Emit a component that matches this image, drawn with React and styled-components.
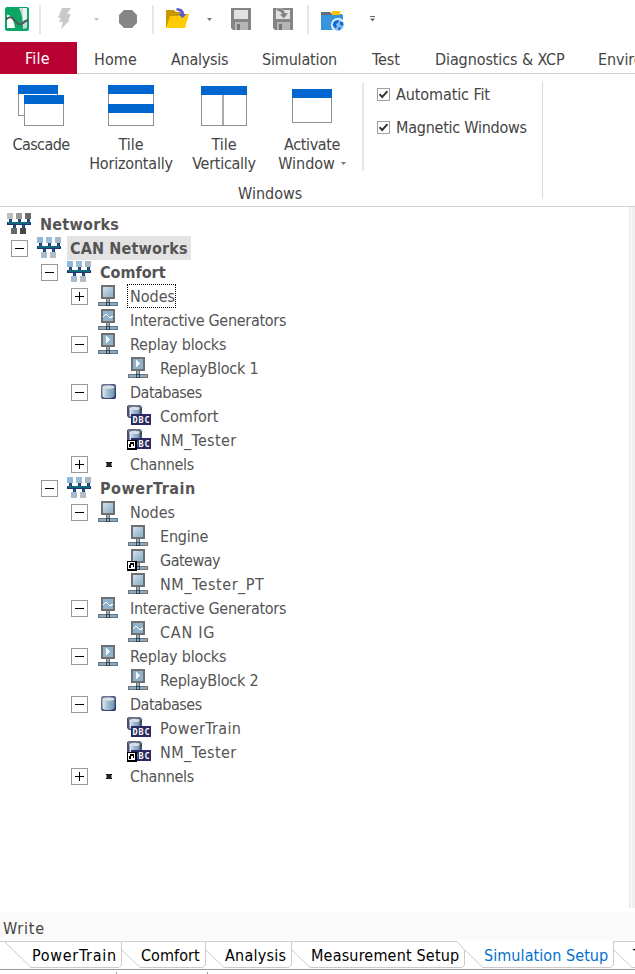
import React from 'react';
import styled, { createGlobalStyle } from 'styled-components';

const Global = createGlobalStyle`
  * { box-sizing: border-box; }
  body { margin: 0; background: #fff; overflow: hidden; }
  svg { display: block; flex: none; }
`;

const Window = styled.div`
  width: 635px;
  height: 974px;
  overflow: hidden;
  display: flex;
  flex-direction: column;
  background: #fff;
  font: 16px/19px "DejaVu Sans Condensed", "DejaVu Sans", sans-serif;
  color: #444;
  white-space: nowrap;
`;

const Text = styled.span`
  letter-spacing: ${(p) => p.$ls || 0}px;
`;

/* ---------- quick access bar ---------- */
const QuickBar = styled.header`
  height: 42px;
  flex: none;
  display: flex;
  align-items: flex-start;
  padding-left: 5px;
`;
const Slot = styled.div`
  width: ${(p) => p.$w}px;
  padding-top: ${(p) => p.$top}px;
  flex: none;
`;
const Divider = styled.div`
  width: 2px;
  height: 29px;
  margin: 5px ${(p) => p.$gap}px 0 0;
  background: #e6e6e6;
  flex: none;
`;

const Logo = () => (
  <svg width="24" height="24" viewBox="0 0 24 24">
    <rect width="24" height="24" rx="2" fill="#0aa765" />
    <path d="M2 9Q2 7 4 8Q9 12 10 21H2Z" fill="#fff" />
    <path d="M14 1H22V21L18 22Q18 8 14 1Z" fill="#cdd6dd" />
    <path d="M18 1H22V13L18 14Z" fill="#eef1f4" />
    <path d="M1 12.5Q5 8.5 8 11.5C12 16 14 19 18 16Q20 14 23 13" fill="none" stroke="#50555a" strokeWidth="2" />
  </svg>
);
const Bolt = () => (
  <svg width="14" height="22" viewBox="0 0 14 22">
    <path d="M4 0H13L9 6H13L10 12H12L3 21L5 14H1L3 10H0Z" fill="#c9c9c9" />
  </svg>
);
const Caret = ({ color = '#777' }) => (
  <svg width="5" height="3" viewBox="0 0 5 3"><path d="M0 0H5L2.5 3Z" fill={color} /></svg>
);
const Stop = () => (
  <svg width="18" height="18" viewBox="0 0 18 18">
    <path d="M5 0H13L18 5V13L13 18H5L0 13V5Z" fill="#868686" />
  </svg>
);
const OpenFolder = () => (
  <svg width="23" height="20" viewBox="0 0 23 20">
    <path d="M0 2H8L10 4H18V19H0Z" fill="#c99700" />
    <path d="M4 8H12L14 6H23L19 20H0Z" fill="#ffcb05" />
    <path d="M10.5 0Q18 0 18 6H20.5L16.5 10L12 6H15Q15 3 10.5 2.5Z" fill="#5a5ad0" />
  </svg>
);
const Floppy = ({ arrow }) => (
  <svg width="22" height="22" viewBox="0 0 22 22">
    <path d="M1 0H21V22H3L1 20Z" fill="#858585" />
    <path d="M4 2H18V11H4Z" fill="#e2e2e2" />
    <path d="M5 14H18V22H5Z" fill="#b5b5b5" />
    <path d="M7 16H10V22H7Z" fill="#777" />
    {arrow && <path d="M5 0Q12 0 13 5H16.5L12 10.5L7 6H10Q9 3 5 3Z" fill="#808080" stroke="#e2e2e2" strokeWidth=".5" />}
  </svg>
);
const GlobeFolder = () => (
  <svg width="24" height="20" viewBox="0 0 24 20">
    <path d="M0 1H9L11 3H21V6H0Z" fill="#666b78" />
    <rect x="11" y="0" width="8" height="4" fill="#ffc400" />
    <rect y="4" width="22" height="15" fill="#3994dc" />
    <circle cx="17" cy="14" r="7" fill="#fff" />
    <circle cx="17" cy="14" r="5.7" fill="#87bcf2" />
    <path d="M13 10.5L17 9L18 11L15 13L16 16L14 17L11.8 14ZM19 11H22L22.4 14L20.5 15L19 13ZM17.5 16.5L20 16L19 19H17Z" fill="#0b6bd0" />
  </svg>
);
const Customize = () => (
  <svg width="5" height="6" viewBox="0 0 5 6">
    <path d="M0 0H5V1H0ZM0 2.5H5L2.5 5.5Z" fill="#666" />
  </svg>
);

/* ---------- ribbon tabs ---------- */
const Tabs = styled.nav`
  height: 32px;
  flex: none;
  display: flex;
  border-bottom: 1px solid #d2d2d2;
`;
const FileTab = styled.div`
  width: 77px;
  height: 32px;
  padding: 7px 0 0 25px;
  background: #b90032;
  color: #fff;
  flex: none;
`;
const Tab = styled.div`
  width: ${(p) => p.$w}px;
  padding: 8px 0 0 17px;
  flex: none;
`;

/* ---------- ribbon ---------- */
const Ribbon = styled.section`
  height: 133px;
  flex: none;
  display: flex;
  border-bottom: 1px solid #d2d2d2;
`;
const Group = styled.div`
  width: 543px;
  height: 118px;
  margin-top: 7px;
  border-right: 1px solid #dadada;
  display: flex;
  flex-direction: column;
`;
const GroupBody = styled.div`
  height: 103px;
  flex: none;
  display: flex;
  padding-top: 2px;
`;
const GroupTitle = styled.div`
  flex: none;
  padding-left: 238px;
`;
const BigButton = styled.div`
  width: ${(p) => p.$w}px;
  flex: none;
  display: flex;
  flex-direction: column;
  align-items: center;
`;
const IconArea = styled.div`
  height: 52px;
  padding-top: 2px;
`;
const ButtonLine = styled.div`
  height: 19px;
  display: flex;
  align-items: center;
  gap: 6px;
`;
const GroupRule = styled.div`
  width: 2px;
  height: 88px;
  margin: 0 13px 0 ${(p) => p.$ml}px;
  background: #e6e6e6;
`;
const Checks = styled.div`
  display: flex;
  flex-direction: column;
  gap: 14px;
  padding-top: 2px;
`;
const CheckRow = styled.div`
  display: flex;
  align-items: center;
  gap: 6px;
`;
const CheckBox = styled.div`
  width: 13px;
  height: 13px;
  border: 1px solid #a0a0a0;
  display: grid;
  place-items: center;
`;
const Check = () => (
  <CheckBox>
    <svg width="9" height="9" viewBox="0 0 9 9"><path d="M.5 4.2L3.2 7L8.5 1.2" fill="none" stroke="#333" strokeWidth="1.9" /></svg>
  </CheckBox>
);

const Pane = ({ x, y, w, h }) => (
  <g>
    <rect x={x + .5} y={y + .5} width={w - 1} height={h - 1} fill="#fff" stroke="#909090" />
    <rect x={x} y={y} width={w} height="9" fill="#0066cf" />
  </g>
);
const windowIcons = {
  cascade: <><Pane x={0} y={0} w={40} h={31} /><Pane x={6} y={10} w={40} h={31} /></>,
  horizontal: <><Pane x={0} y={0} w={46} h={41} /><rect y="19" width="46" height="9" fill="#0066cf" /></>,
  vertical: <><Pane x={0} y={1} w={46} h={40} /><rect x="21" y="10" width="2" height="30" fill="#aaa" /></>,
  activate: <Pane x={3} y={4} w={40} h={34} />,
};
const WindowIcon = ({ kind }) => <svg width="46" height="42" viewBox="0 0 46 42">{windowIcons[kind]}</svg>;

/* ---------- tree ---------- */
const Main = styled.main`
  flex: 1;
  display: flex;
  justify-content: space-between;
`;
const Tree = styled.div`
  padding-top: 5px;
  color: #545454;
`;
const Row = styled.div`
  height: 24px;
  display: flex;
  padding-left: ${(p) => (p.$level ? 7 + 30 * (p.$level - 1) : 7)}px;
`;
const Toggle = styled.div`
  width: 30px;
  padding: 4px 0 0 4px;
`;
const IconBox = styled.div`
  width: 24px;
  height: 24px;
`;
const Label = styled.div`
  height: 24px;
  margin-left: 6px;
  padding: 3px ${(p) => (p.$focus ? 1 : 3)}px 0 3px;
  letter-spacing: ${(p) => p.$ls}px;
  font-weight: ${(p) => (p.$bold ? 700 : 400)};
  background: ${(p) => (p.$selected ? '#e3e3e3' : 'transparent')};
  outline: ${(p) => (p.$focus ? '1px dotted #000' : 'none')};
  outline-offset: -1px;
`;
const Scroll = styled.div`
  width: 6px;
  height: 701px;
  background: #f0f0f0;
  border-left: 2px solid #ededed;
  box-shadow: inset 1px 0 #fafafa;
`;

const Expander = ({ open }) => (
  <svg width="17" height="17" viewBox="0 0 17 17">
    <rect x=".5" y=".5" width="16" height="16" fill="#fff" stroke="#999" />
    <path d={open ? 'M4 8H13V9H4Z' : 'M4 8H13V9H4ZM8 4H9V13H8Z'} fill="#000" />
  </svg>
);
const Shortcut = ({ x, y }) => (
  <g transform={`translate(${x} ${y})`} shapeRendering="crispEdges">
    <rect width="10" height="10" fill="#000" />
    <rect x="1" y="1" width="7" height="7" fill="#fff" />
    <path d="M3 2H7V6H6V4H4V7H2V4H3V3H4V3H3Z" fill="#000" />
  </g>
);
const Network = ({ gray }) => {
  const c = gray ? ['#bdbdbd', '#999', '#686868', '#686868', '#484848'] : ['#90b8d8', '#9dbdd6', '#a4b8c8', '#a8bccb', '#b2bdc6'];
  return (
    <svg width="24" height="24" viewBox="0 0 24 24" shapeRendering="crispEdges">
      <path d="M2 7H5V12H2ZM11 7H14V12H11ZM20 7H23V12H20ZM6 12H9V16H6ZM15 12H18V16H15Z" fill="#263777" />
      <path d="M3 7H4V11H3ZM12 7H13V11H12ZM21 7H22V11H21ZM7 12H8V16H7ZM16 12H17V16H16Z" fill="#146680" />
      <rect y="10" width="24" height="3" fill="#233873" />
      <rect x="1" y="10" width="22" height="2" fill="#10697f" />
      <rect x="0" y="1" width="6" height="6" fill={c[0]} />
      <rect x="9" y="1" width="6" height="6" fill={c[1]} />
      <rect x="18" y="1" width="6" height="6" fill={c[2]} />
      <rect x="4" y="16" width="6" height="6" fill={c[3]} />
      <rect x="13" y="16" width="6" height="6" fill={c[4]} />
    </svg>
  );
};
const NodeIcon = ({ sign, link }) => (
  <svg width="24" height="24" viewBox="0 0 24 24" shapeRendering="crispEdges">
    <defs>
      <linearGradient id="screen" x1="0" y1="0" x2="1" y2="1">
        <stop offset="0" stopColor="#d2e0ea" /><stop offset="1" stopColor="#86aecb" />
      </linearGradient>
    </defs>
    <rect x="4" y="1" width="14" height="14" fill="#6f6f6f" />
    <rect x="6" y="3" width="10" height="10" fill={sign ? '#8fb3cc' : 'url(#screen)'} />
    <rect x="9" y="15" width="4" height="3" fill="#707070" />
    <rect x="10" y="15" width="2" height="3" fill="#95b3c8" />
    <rect x="1" y="18" width="20" height="4" fill="#6d747a" />
    <rect x="2" y="19" width="18" height="2" fill="#88acc5" />
    <rect x="9" y="18" width="4" height="4" fill="#39424b" />
    <rect x="10" y="19" width="2" height="2" fill="#8db1ca" />
    {sign === 'wave' && <path d="M6 8H7V7H8V6H10V7H11V8H12V9H14V8H16V9H15V10H12V9H11V8H10V7H8V8H7V9H6Z" fill="#fff" />}
    {sign === 'play' && <path d="M9 4H10V5H11V6H12V7H13V8H12V9H11V10H10V11H9Z" fill="#fff" />}
    {link && <Shortcut x={0} y={13} />}
  </svg>
);
const Cylinder = () => (
  <svg width="24" height="24" viewBox="0 0 24 24">
    <defs>
      <linearGradient id="drum">
        <stop offset="0" stopColor="#e3eaf2" /><stop offset=".45" stopColor="#9fb9cf" /><stop offset="1" stopColor="#7497b8" />
      </linearGradient>
      <linearGradient id="drumEdge" x1="0" y1="0" x2="1" y2="1">
        <stop offset="0" stopColor="#7b8799" /><stop offset="1" stopColor="#202a5c" />
      </linearGradient>
    </defs>
    <path d="M6 4H17Q19 4 19 6V17Q19 19 17 19H6Q4 19 4 17V6Q4 4 6 4Z" fill="url(#drumEdge)" />
    <path d="M5.5 7H17.5V16Q16 18 11.5 18Q7 18 5.5 16.5Z" fill="url(#drum)" />
    <ellipse cx="11.5" cy="7" rx="6" ry="1.8" fill="#d8e1e9" />
  </svg>
);
const Dbc = ({ link }) => (
  <svg width="25" height="24" viewBox="0 0 25 24">
    <path d="M0 2L2 1H13L15 3V14H2L0 12Z" fill="#465170" />
    <path d="M1 2L3 1H12L14 3V4H1Z" fill="#6b7485" />
    <path d="M2.5 4H12.5V13H4L2.5 12Z" fill="url(#drum)" />
    <ellipse cx="7.5" cy="4.4" rx="5" ry="1.6" fill="#d8e1e9" />
    <rect x="4" y="10" width="20" height="11" fill="#2a2a62" />
    <text x="5.5" y="18.8" fill="#fff" fontFamily="DejaVu Sans Mono" fontWeight="700" fontSize="8.5" textLength="17" lengthAdjust="spacing">DBC</text>
    {link && <Shortcut x={0} y={12} />}
  </svg>
);
const Channel = () => (
  <svg width="24" height="24" viewBox="0 0 24 24" shapeRendering="crispEdges">
    <rect x="9" y="10" width="6" height="5" fill="#9a9a9a" />
    <rect x="10" y="10" width="4" height="5" fill="#222" />
    <path d="M9 10H10V11H9ZM14 10H15V11H14ZM9 14H10V15H9ZM14 14H15V15H14Z" fill="#000" />
  </svg>
);
const icons = {
  netGray: <Network gray />, net: <Network />, node: <NodeIcon />, nodeLink: <NodeIcon link />,
  wave: <NodeIcon sign="wave" />, play: <NodeIcon sign="play" />, db: <Cylinder />,
  dbc: <Dbc />, dbcLink: <Dbc link />, channel: <Channel />,
};

const rows = [
  { level: 0, icon: 'netGray', text: 'Networks', ls: 0.25, bold: true },
  { level: 1, open: true, icon: 'net', text: 'CAN Networks', ls: 0.15, bold: true, selected: true },
  { level: 2, open: true, icon: 'net', text: 'Comfort', ls: 0, bold: true },
  { level: 3, open: false, icon: 'node', text: 'Nodes', ls: 0, focus: true },
  { level: 3, icon: 'wave', text: 'Interactive Generators', ls: -0.3 },
  { level: 3, open: true, icon: 'play', text: 'Replay blocks', ls: -0.2 },
  { level: 4, icon: 'play', text: 'ReplayBlock 1', ls: -0.22 },
  { level: 3, open: true, icon: 'db', text: 'Databases', ls: -0.5 },
  { level: 4, icon: 'dbc', text: 'Comfort', ls: 0 },
  { level: 4, icon: 'dbcLink', text: 'NM_Tester', ls: 0.36 },
  { level: 3, open: false, icon: 'channel', text: 'Channels', ls: -0.35 },
  { level: 2, open: true, icon: 'net', text: 'PowerTrain', ls: 0.5, bold: true },
  { level: 3, open: true, icon: 'node', text: 'Nodes', ls: 0 },
  { level: 4, icon: 'node', text: 'Engine', ls: -0.2 },
  { level: 4, icon: 'nodeLink', text: 'Gateway', ls: -0.5 },
  { level: 4, icon: 'node', text: 'NM_Tester_PT', ls: 0.54 },
  { level: 3, open: true, icon: 'wave', text: 'Interactive Generators', ls: -0.3 },
  { level: 4, icon: 'wave', text: 'CAN IG', ls: 0.75 },
  { level: 3, open: true, icon: 'play', text: 'Replay blocks', ls: -0.2 },
  { level: 4, icon: 'play', text: 'ReplayBlock 2', ls: -0.22 },
  { level: 3, open: true, icon: 'db', text: 'Databases', ls: -0.5 },
  { level: 4, icon: 'dbc', text: 'PowerTrain', ls: 0.36 },
  { level: 4, icon: 'dbcLink', text: 'NM_Tester', ls: 0.36 },
  { level: 3, open: false, icon: 'channel', text: 'Channels', ls: -0.35 },
];

/* ---------- bottom ---------- */
const WriteBar = styled.div`
  height: 28px;
  flex: none;
  background: #fafafa;
  padding: 7px 0 0 3px;
`;
const DesktopTabs = styled.div`
  height: 29px;
  margin-top: 1px;
  flex: none;
  display: flex;
  border-bottom: 1px solid #999;
`;
const DesktopTab = styled.div`
  position: relative;
  width: ${(p) => p.$w}px;
  height: 28px;
  padding: 5px 0 0 ${(p) => p.$pad}px;
  flex: none;
  letter-spacing: ${(p) => p.$ls}px;
  color: ${(p) => (p.$active ? '#0072ce' : '#000')};
`;
const Outline = styled.svg`
  position: absolute;
  inset: 0;
`;
const desktopTabs = [
  { text: 'PowerTrain', w: 122, pad: 32, ls: 0.7, d: 'M0 .5H121.5V24L119 26.5H31L5 1' },
  { text: 'Comfort', w: 84, pad: 19, ls: 0.06, d: 'M0 .5H83.5V24L81 26.5H18L0 9' },
  { text: 'Analysis', w: 86, pad: 19, ls: 0.25, d: 'M0 .5H85.5V24L83 26.5H18L0 9' },
  { text: 'Measurement Setup', w: 173, pad: 19, ls: 0.18, d: 'M0 .5H165L172.5 9V24L170 26.5H18L0 9' },
  { text: 'Simulation Setup', w: 149, pad: 19, ls: 0.07, active: true, d: 'M148.5 0V24L146 26.5H18L0 9' },
  { text: 'Trace', w: 60, pad: 19, ls: 0, d: 'M0 .5H60M0 9L18 26.5H60' },
];
const Ticks = styled.div`
  height: 4px;
  flex: none;
  display: flex;
  align-items: flex-end;
  gap: 90px;
  padding-left: 116px;
`;
const Tick = styled.div`
  width: 1px;
  height: 2px;
  background: #999;
`;

export default function App() {
  return (
    <Window>
      <Global />
      <QuickBar>
        <Slot $w={34} $top={7}><Logo /></Slot>
        <Divider $gap={17} />
        <Slot $w={36} $top={8}><Bolt /></Slot>
        <Slot $w={25} $top={18}><Caret color="#c4c4c4" /></Slot>
        <Slot $w={33} $top={10}><Stop /></Slot>
        <Divider $gap={12} />
        <Slot $w={41} $top={8}><OpenFolder /></Slot>
        <Slot $w={23} $top={18}><Caret /></Slot>
        <Slot $w={42} $top={8}><Floppy /></Slot>
        <Slot $w={35} $top={8}><Floppy arrow /></Slot>
        <Divider $gap={12} />
        <Slot $w={49} $top={11}><GlobeFolder /></Slot>
        <Slot $w={5} $top={16}><Customize /></Slot>
      </QuickBar>

      <Tabs>
        <FileTab><Text $ls={0.25}>File</Text></FileTab>
        <Tab $w={77}><Text $ls={0.1}>Home</Text></Tab>
        <Tab $w={91}><Text $ls={-0.26}>Analysis</Text></Tab>
        <Tab $w={110}><Text $ls={-0.17}>Simulation</Text></Tab>
        <Tab $w={63}><Text $ls={-0.1}>Test</Text></Tab>
        <Tab $w={163}><Text $ls={-0.1}>Diagnostics &amp; XCP</Text></Tab>
        <Tab $w={110}><Text $ls={-0.1}>Environment</Text></Tab>
      </Tabs>

      <Ribbon>
        <Group>
          <GroupBody>
            <BigButton $w={82}>
              <IconArea><WindowIcon kind="cascade" /></IconArea>
              <ButtonLine><Text $ls={-0.6}>Cascade</Text></ButtonLine>
            </BigButton>
            <BigButton $w={98}>
              <IconArea><WindowIcon kind="horizontal" /></IconArea>
              <ButtonLine><Text>Tile</Text></ButtonLine>
              <ButtonLine><Text $ls={-0.2}>Horizontally</Text></ButtonLine>
            </BigButton>
            <BigButton $w={88}>
              <IconArea><WindowIcon kind="vertical" /></IconArea>
              <ButtonLine><Text>Tile</Text></ButtonLine>
              <ButtonLine><Text $ls={-0.28}>Vertically</Text></ButtonLine>
            </BigButton>
            <BigButton $w={88}>
              <IconArea><WindowIcon kind="activate" /></IconArea>
              <ButtonLine><Text $ls={-0.4}>Activate</Text></ButtonLine>
              <ButtonLine><Text>Window</Text><Caret /></ButtonLine>
            </BigButton>
            <GroupRule $ml={6} />
            <Checks>
              <CheckRow><Check /><Text $ls={-0.1}>Automatic Fit</Text></CheckRow>
              <CheckRow><Check /><Text $ls={-0.24}>Magnetic Windows</Text></CheckRow>
            </Checks>
          </GroupBody>
          <GroupTitle><Text>Windows</Text></GroupTitle>
        </Group>
      </Ribbon>

      <Main>
        <Tree>
          {rows.map((r, i) => (
            <Row key={i} $level={r.level}>
              {r.level > 0 && <Toggle>{r.open !== undefined && <Expander open={r.open} />}</Toggle>}
              <IconBox>{icons[r.icon]}</IconBox>
              <Label $bold={r.bold} $ls={r.ls} $selected={r.selected} $focus={r.focus}>{r.text}</Label>
            </Row>
          ))}
        </Tree>
        <Scroll />
      </Main>

      <WriteBar><Text $ls={0.8}>Write</Text></WriteBar>
      <DesktopTabs>
        {desktopTabs.map((t) => (
          <DesktopTab key={t.text} $w={t.w} $pad={t.pad} $ls={t.ls} $active={t.active}>
            <Outline width={t.w} height="28" fill="none" stroke="#cbcbcb"><path d={t.d} /></Outline>
            {t.text}
          </DesktopTab>
        ))}
      </DesktopTabs>
      <Ticks><Tick /><Tick /></Ticks>
    </Window>
  );
}
